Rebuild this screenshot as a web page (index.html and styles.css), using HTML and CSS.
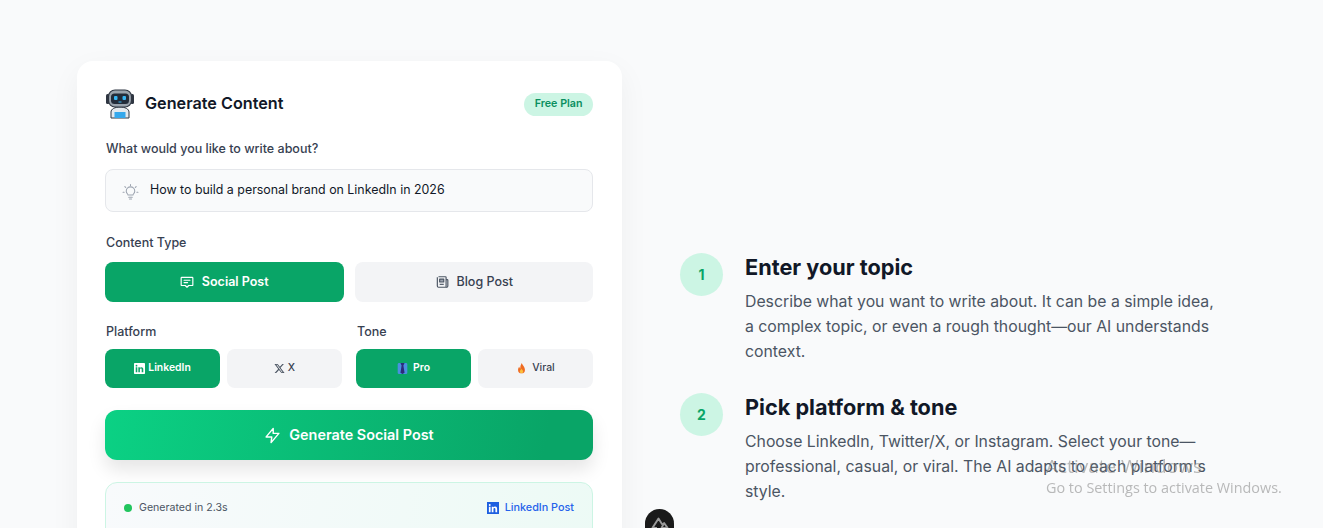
FILE: index.html
```html
<!DOCTYPE html>
<html lang="en">
<head>
    <meta charset="UTF-8">
    <meta name="viewport" content="width=device-width, initial-scale=1.0">
    <title>Generate Content</title>
    <link rel="stylesheet" href="styles.css">
</head>
<body>
    <main class="page">
        <section class="card">
            <div class="card-head">
                <div class="card-title">
                    <svg class="robot" viewBox="0 0 30 30">
                        <rect x="1" y="5" width="3.500" height="10" rx="1.500" fill="#2f3642"/>
                        <rect x="25.500" y="5" width="3.500" height="10" rx="1.500" fill="#2f3642"/>
                        <path d="M6 23c0-3 4-5 9-5s9 2 9 5v6H6z" fill="#e4e9ee" stroke="#2f3642" stroke-width="1"/>
                        <rect x="9.500" y="23" width="11" height="6" fill="#35a8ec"/>
                        <rect x="3.500" y="1" width="23" height="17" rx="6.500" fill="#9aa3ad" stroke="#2f3642" stroke-width="1.200"/>
                        <rect x="6" y="4.500" width="18" height="10.500" rx="3.500" fill="#232c3a"/>
                        <rect x="9" y="7" width="3.500" height="4" rx="1" fill="#38b6f4"/>
                        <rect x="17.500" y="7" width="3.500" height="4" rx="1" fill="#38b6f4"/>
                        <rect x="13.500" y="12.500" width="3" height="1" fill="#38b6f4"/>
                    </svg>
                    <h2>Generate Content</h2>
                </div>
                <span class="plan">Free Plan</span>
            </div>

            <p class="label label-topic">What would you like to write about?</p>
            <div class="topic">
                <svg class="bulb" viewBox="0 0 24 24" fill="none" stroke="#9ca3af" stroke-width="1.500" stroke-linecap="round" stroke-linejoin="round">
                    <path d="M12 2v1.500M4 5l1.200 1.200M20 5l-1.200 1.200M1.500 13H3M21 13h1.500"/>
                    <path d="M8.500 17c0-1.500-2.500-2.500-2.500-5.500a6 6 0 0 1 12 0c0 3-2.500 4-2.500 5.500z"/>
                    <path d="M9.500 20h5M10.500 22.500h3"/>
                </svg>
                <span>How to build a personal brand on LinkedIn in 2026</span>
            </div>

            <p class="label label-type">Content Type</p>
            <div class="row">
                <button class="choice large active">
                    <svg class="icon" viewBox="0 0 24 24" fill="none" stroke="currentColor" stroke-width="2" stroke-linejoin="round" stroke-linecap="round">
                        <path d="M3 4h18a1 1 0 0 1 1 1v12a1 1 0 0 1-1 1h-6l-3 3-3-3H3a1 1 0 0 1-1-1V5a1 1 0 0 1 1-1z"/>
                        <path d="M7 9h10M7 13h6"/>
                    </svg>
                    Social Post
                </button>
                <button class="choice large">
                    <svg class="icon" viewBox="0 0 24 24" fill="none" stroke="#4b5563" stroke-width="2" stroke-linejoin="round">
                        <path d="M6 3h12a1 1 0 0 1 1 1v16a1 1 0 0 0 1 1H6a2 2 0 0 1-2-2V4"/>
                        <path d="M19 8h2a1 1 0 0 1 1 1v10a2 2 0 0 1-2 2"/>
                        <rect x="8" y="7" width="7" height="5" fill="#9ca3af"/>
                        <path d="M8 16h7"/>
                    </svg>
                    Blog Post
                </button>
            </div>

            <div class="options">
                <div class="option-group">
                    <p class="label">Platform</p>
                    <div class="pair">
                        <button class="choice small active">
                            <svg class="icon-small" viewBox="0 0 16 16">
                                <rect width="16" height="16" rx="1" fill="#fff"/>
                                <path d="M2.500 6.200h2.300V13.500H2.500zM3.650 2.600a1.300 1.300 0 1 1 0 2.600 1.300 1.300 0 0 1 0-2.600zM6.300 6.200h2.200v1c.4-.7 1.200-1.200 2.300-1.200 2.200 0 2.700 1.400 2.700 3.300v4.200h-2.300V9.800c0-.9 0-1.900-1.200-1.900s-1.400.9-1.400 1.800v3.800H6.300z" fill="#0aa569"/>
                            </svg>
                            LinkedIn
                        </button>
                        <button class="choice small">
                            <svg class="icon-small" viewBox="0 0 24 24">
                                <path d="M18.200 2h3.400l-7.400 8.500L23 22h-6.800l-5.300-7-6.100 7H1.300l7.900-9.100L1 2h7l4.800 6.400zm-1.200 18h1.900L7 3.900H5z" fill="#4b5563"/>
                            </svg>
                            X
                        </button>
                    </div>
                </div>
                <div class="option-group">
                    <p class="label">Tone</p>
                    <div class="pair">
                        <button class="choice small tone active">
                            <svg class="icon-small" viewBox="0 0 16 16">
                                <rect x="1" y="0" width="14" height="16" rx="2" fill="#4a8fe0"/>
                                <path d="M5 0h6L9.300 3.500 11 14l-3 2-3-2 1.700-10.500z" fill="#2c2a7a"/>
                            </svg>
                            Pro
                        </button>
                        <button class="choice small tone">
                            <svg class="icon-small" viewBox="0 0 16 16">
                                <path d="M8.500 0c.5 3 4.500 5 4.500 10a5 5 0 0 1-10 0c0-2 .8-3.500 2-4.500 0 1.500.5 2.300 1.300 2.500C6 5 7 2 8.500 0z" fill="#ef6c22"/>
                                <path d="M8 8c.3 1.500 2.500 2.500 2.500 4.500a2.500 2.500 0 0 1-5 0C5.500 10.500 7.500 10 8 8z" fill="#fbbf3c"/>
                            </svg>
                            Viral
                        </button>
                    </div>
                </div>
            </div>

            <button class="generate">
                <svg class="icon-bolt" viewBox="0 0 24 24" fill="none" stroke="#fff" stroke-width="2" stroke-linejoin="round">
                    <path d="M13 2 3 14h8l-1 8 11-13h-8z"/>
                </svg>
                Generate Social Post
            </button>

            <div class="result">
                <span class="status"><i class="dot"></i>Generated in 2.3s</span>
                <span class="kind">
                    <svg class="icon-kind" viewBox="0 0 16 16">
                        <rect width="16" height="16" fill="#1d5fe0"/>
                        <path d="M2.500 6.200h2.300V13.500H2.500zM3.650 2.600a1.300 1.300 0 1 1 0 2.600 1.300 1.300 0 0 1 0-2.600zM6.300 6.200h2.200v1c.4-.7 1.200-1.200 2.300-1.200 2.200 0 2.700 1.400 2.700 3.300v4.200h-2.300V9.800c0-.9 0-1.900-1.200-1.900s-1.400.9-1.400 1.800v3.800H6.300z" fill="#fff"/>
                    </svg>
                    LinkedIn Post
                </span>
            </div>
        </section>

        <section class="steps">
            <div class="step">
                <div class="step-num">1</div>
                <div>
                    <h3>Enter your topic</h3>
                    <p>Describe what you want to write about. It can be a simple idea, a complex topic, or even a rough thought—our AI understands context.</p>
                </div>
            </div>
            <div class="step">
                <div class="step-num">2</div>
                <div>
                    <h3>Pick platform &amp; tone</h3>
                    <p>Choose LinkedIn, Twitter/X, or Instagram. Select your tone—professional, casual, or viral. The AI adapts to each platform's style.</p>
                </div>
            </div>
        </section>
    </main>

    <div class="nuxt-badge">
        <svg viewBox="0 0 24 16" fill="none" stroke="#9a9a9a" stroke-width="2.500" stroke-linejoin="round">
            <path d="M8 14.500H2L10 2l5 8M14 14.500h8L17.500 8z"/>
        </svg>
    </div>

    <div class="watermark">
        <p class="watermark-title">Activate Windows</p>
        <p>Go to Settings to activate Windows.</p>
    </div>
</body>
</html>
```

FILE: styles.css
```css
* {
    box-sizing: border-box;
}
html, body {
    height: 528px;
    margin: 0;
    overflow: hidden;
}
body {
    background: #f9fafb;
    color: #111827;
    font-family: "Inter", "Noto Sans", sans-serif;
}
p, h2, h3 {
    margin: 0;
}
.page {
    display: flex;
    align-items: flex-start;
    gap: 58px;
    padding: 61px 0 0 77px;
}

/* left card */
.card {
    flex: none;
    width: 545px;
    padding: 29px 29px 28px 28px;
    background: #fff;
    border-radius: 16px;
    box-shadow: 0 10px 30px rgba(0, 0, 0, 0.05);
}
.card-head {
    display: flex;
    align-items: center;
    justify-content: space-between;
    height: 28px;
    margin-bottom: 24px;
}
.card-title {
    display: flex;
    align-items: center;
    gap: 10px;
}
.robot {
    width: 30px;
    height: 30px;
}
.card-title h2 {
    padding-bottom: 2px;
    font-size: 16.200px;
    font-weight: 600;
}
.plan {
    padding: 4px 10.500px 6px;
    border-radius: 999px;
    background: #ccf5e4;
    color: #0a8f5f;
    font-size: 10.700px;
    font-weight: 600;
}
.label {
    margin-bottom: 11px;
    padding-left: 1px;
    color: #374151;
    font-size: 12.500px;
    font-weight: 500;
    line-height: 14px;
}
.label-topic {
    margin-bottom: 13px;
}
.label-type {
    margin-bottom: 12px;
}
.topic {
    display: flex;
    align-items: center;
    gap: 11px;
    height: 43px;
    margin-bottom: 24px;
    padding: 0 16px 3px;
    background: #f9fafb;
    border: 1px solid #e5e7eb;
    border-radius: 8px;
    font-size: 12.400px;
}
.bulb {
    width: 17px;
    height: 17px;
    margin-top: 4px;
}
.row {
    display: flex;
    gap: 11px;
    margin-bottom: 23px;
}
.choice {
    display: flex;
    flex: 1;
    align-items: center;
    justify-content: center;
    background: #f3f4f6;
    border: none;
    border-radius: 8px;
    color: #374151;
    font-family: inherit;
    cursor: pointer;
}
.choice.active {
    background: #09a567;
    color: #fff;
}
.large {
    gap: 8px;
    height: 40px;
    padding-bottom: 2px;
    font-size: 12.500px;
    font-weight: 500;
}
.large.active {
    font-weight: 600;
}
.small {
    gap: 3px;
    height: 39px;
    padding-bottom: 3px;
    font-size: 10.400px;
    font-weight: 500;
}
.small.active {
    font-weight: 600;
}
.tone {
    gap: 5px;
}
.icon {
    width: 14px;
    height: 14px;
    margin-top: 1px;
}
.icon-small {
    width: 11px;
    height: 11px;
    margin-top: 1px;
}
.icon-kind {
    width: 12px;
    height: 12px;
}
.options {
    display: grid;
    grid-template-columns: 237px 237px;
    gap: 14px;
    margin-bottom: 22px;
}
.options .label {
    margin-bottom: 10px;
}
.pair {
    display: flex;
    gap: 7px;
}
.generate {
    display: flex;
    align-items: center;
    justify-content: center;
    gap: 8px;
    width: 100%;
    height: 50px;
    margin-bottom: 22px;
    padding-bottom: 3px;
    background: linear-gradient(100deg, #0bd184, #09a567 90%);
    border: none;
    border-radius: 12px;
    box-shadow: 0 10px 18px rgba(0, 0, 0, 0.1);
    color: #fff;
    font-family: inherit;
    font-size: 14.400px;
    font-weight: 600;
    cursor: pointer;
}
.icon-bolt {
    width: 17px;
    height: 17px;
    margin-top: 3px;
}
.result {
    display: flex;
    align-items: flex-start;
    justify-content: space-between;
    height: 200px;
    padding: 18px 18px 0;
    background: linear-gradient(100deg, #f8fafc, #ecfaf5);
    border: 1px solid #ccf5e4;
    border-radius: 12px;
    font-size: 10.600px;
}
.status {
    display: flex;
    align-items: center;
    gap: 7px;
    color: #4b5563;
}
.dot {
    width: 8px;
    height: 8px;
    background: #22c55e;
    border-radius: 50%;
}
.kind {
    display: flex;
    align-items: center;
    gap: 6px;
    color: #2563eb;
    font-size: 10.800px;
    font-weight: 500;
}

/* right column */
.steps {
    display: flex;
    flex-direction: column;
    gap: 29px;
    width: 540px;
    padding-top: 192px;
}
.step {
    display: flex;
    gap: 22px;
}
.step-num {
    display: flex;
    flex: none;
    align-items: center;
    justify-content: center;
    width: 43px;
    height: 43px;
    background: #ccf5e4;
    border-radius: 50%;
    color: #09a567;
    font-size: 14px;
    font-weight: 700;
}
.step h3 {
    margin-bottom: 8px;
    color: #111827;
    font-size: 21.700px;
    font-weight: 700;
    line-height: 28px;
}
.step p {
    color: #4b5563;
    font-size: 15.800px;
    line-height: 25px;
}

/* overlays */
.nuxt-badge {
    position: fixed;
    left: 645px;
    top: 509px;
    display: flex;
    justify-content: center;
    width: 29px;
    height: 40px;
    padding-top: 8px;
    background: #1a1a1a;
    border-radius: 15px;
}
.nuxt-badge svg {
    width: 18px;
    height: 12px;
}
.watermark {
    position: fixed;
    left: 1046px;
    top: 455px;
    color: rgba(120, 120, 120, 0.5);
    font-family: "Open Sans", sans-serif;
    font-size: 14.400px;
    pointer-events: none;
}
.watermark-title {
    margin-bottom: 1px;
    font-size: 19px;
    line-height: 22px;
}
```
